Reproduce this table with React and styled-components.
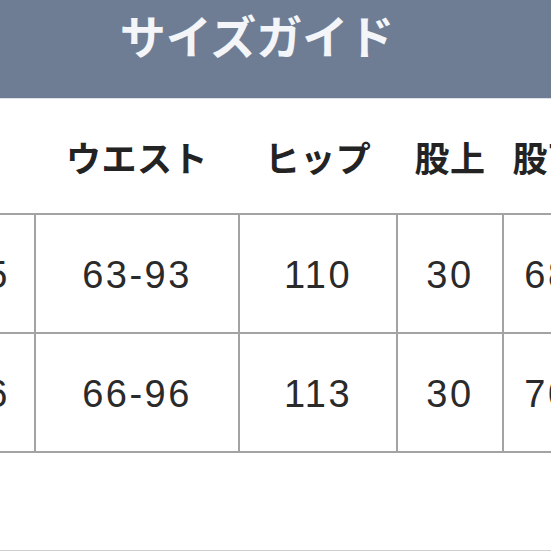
import React from "react";
import styled, { createGlobalStyle } from "styled-components";

const Global = createGlobalStyle`
  html, body { margin: 0; padding: 0; background: #ffffff; }
  * { box-sizing: border-box; }
`;

const Page = styled.div`
  width: 551px;
  height: 551px;
  overflow: hidden;
  background: #ffffff;
  border-bottom: 1px solid #cfcfcf;
  display: flex;
  flex-direction: column;
`;

const Banner = styled.div`
  height: 99px;
  flex: none;
  background: #6e7d94;
  border-bottom: 1px solid #dde1e7;
  display: flex;
  justify-content: center;
  align-items: center;
  padding-bottom: 30px;
  padding-right: 37px;
`;

const Title = styled.h1`
  margin: 0;
  font-family: "Noto Sans CJK JP", "Liberation Sans", sans-serif;
  font-weight: 700;
  font-size: 46px;
  line-height: 66px;
  letter-spacing: 0px;
  color: #f3f5f8;
`;

const TableWrap = styled.div`
  margin-left: -126px;
`;

const Table = styled.table`
  border-collapse: collapse;
  table-layout: fixed;
  width: 718px;
`;

const HeadCell = styled.th`
  height: 115px;
  padding: 0;
  text-align: center;
  vertical-align: middle;
  font-family: "Noto Sans CJK JP", "Liberation Sans", sans-serif;
  font-weight: 700;
  font-size: 35px;
  letter-spacing: 0.5px;
  color: #232323;
  border-bottom: 2px solid #a3a3a3;
  white-space: nowrap;
`;

const DataRow = styled.tr`
  height: 119px;
`;

const Cell = styled.td`
  padding: 3px 0 0 0;
  text-align: center;
  vertical-align: middle;
  font-family: "Liberation Sans", Arial, sans-serif;
  font-weight: 400;
  font-size: 38px;
  letter-spacing: 2.5px;
  color: #2a2a2a;
  border: 2px solid #a3a3a3;
  white-space: nowrap;
`;

const columns = [
  { label: "総丈", width: 160 },
  { label: "ウエスト", width: 204 },
  { label: "ヒップ", width: 158 },
  { label: "股上", width: 106 },
  { label: "股下", width: 90 },
];

const rows = [
  ["83-95", "63-93", "110", "30", "68"],
  ["86-96", "66-96", "113", "30", "70"],
];

export default function App() {
  return (
    <>
      <Global />
      <Page>
        <Banner>
          <Title>サイズガイド</Title>
        </Banner>
        <TableWrap>
          <Table>
            <colgroup>
              {columns.map((c) => (
                <col key={c.label} style={{ width: c.width }} />
              ))}
            </colgroup>
            <thead>
              <tr>
                {columns.map((c) => (
                  <HeadCell key={c.label}>{c.label}</HeadCell>
                ))}
              </tr>
            </thead>
            <tbody>
              {rows.map((r, i) => (
                <DataRow key={i}>
                  {r.map((v, j) => (
                    <Cell key={j}>{v}</Cell>
                  ))}
                </DataRow>
              ))}
            </tbody>
          </Table>
        </TableWrap>
      </Page>
    </>
  );
}
